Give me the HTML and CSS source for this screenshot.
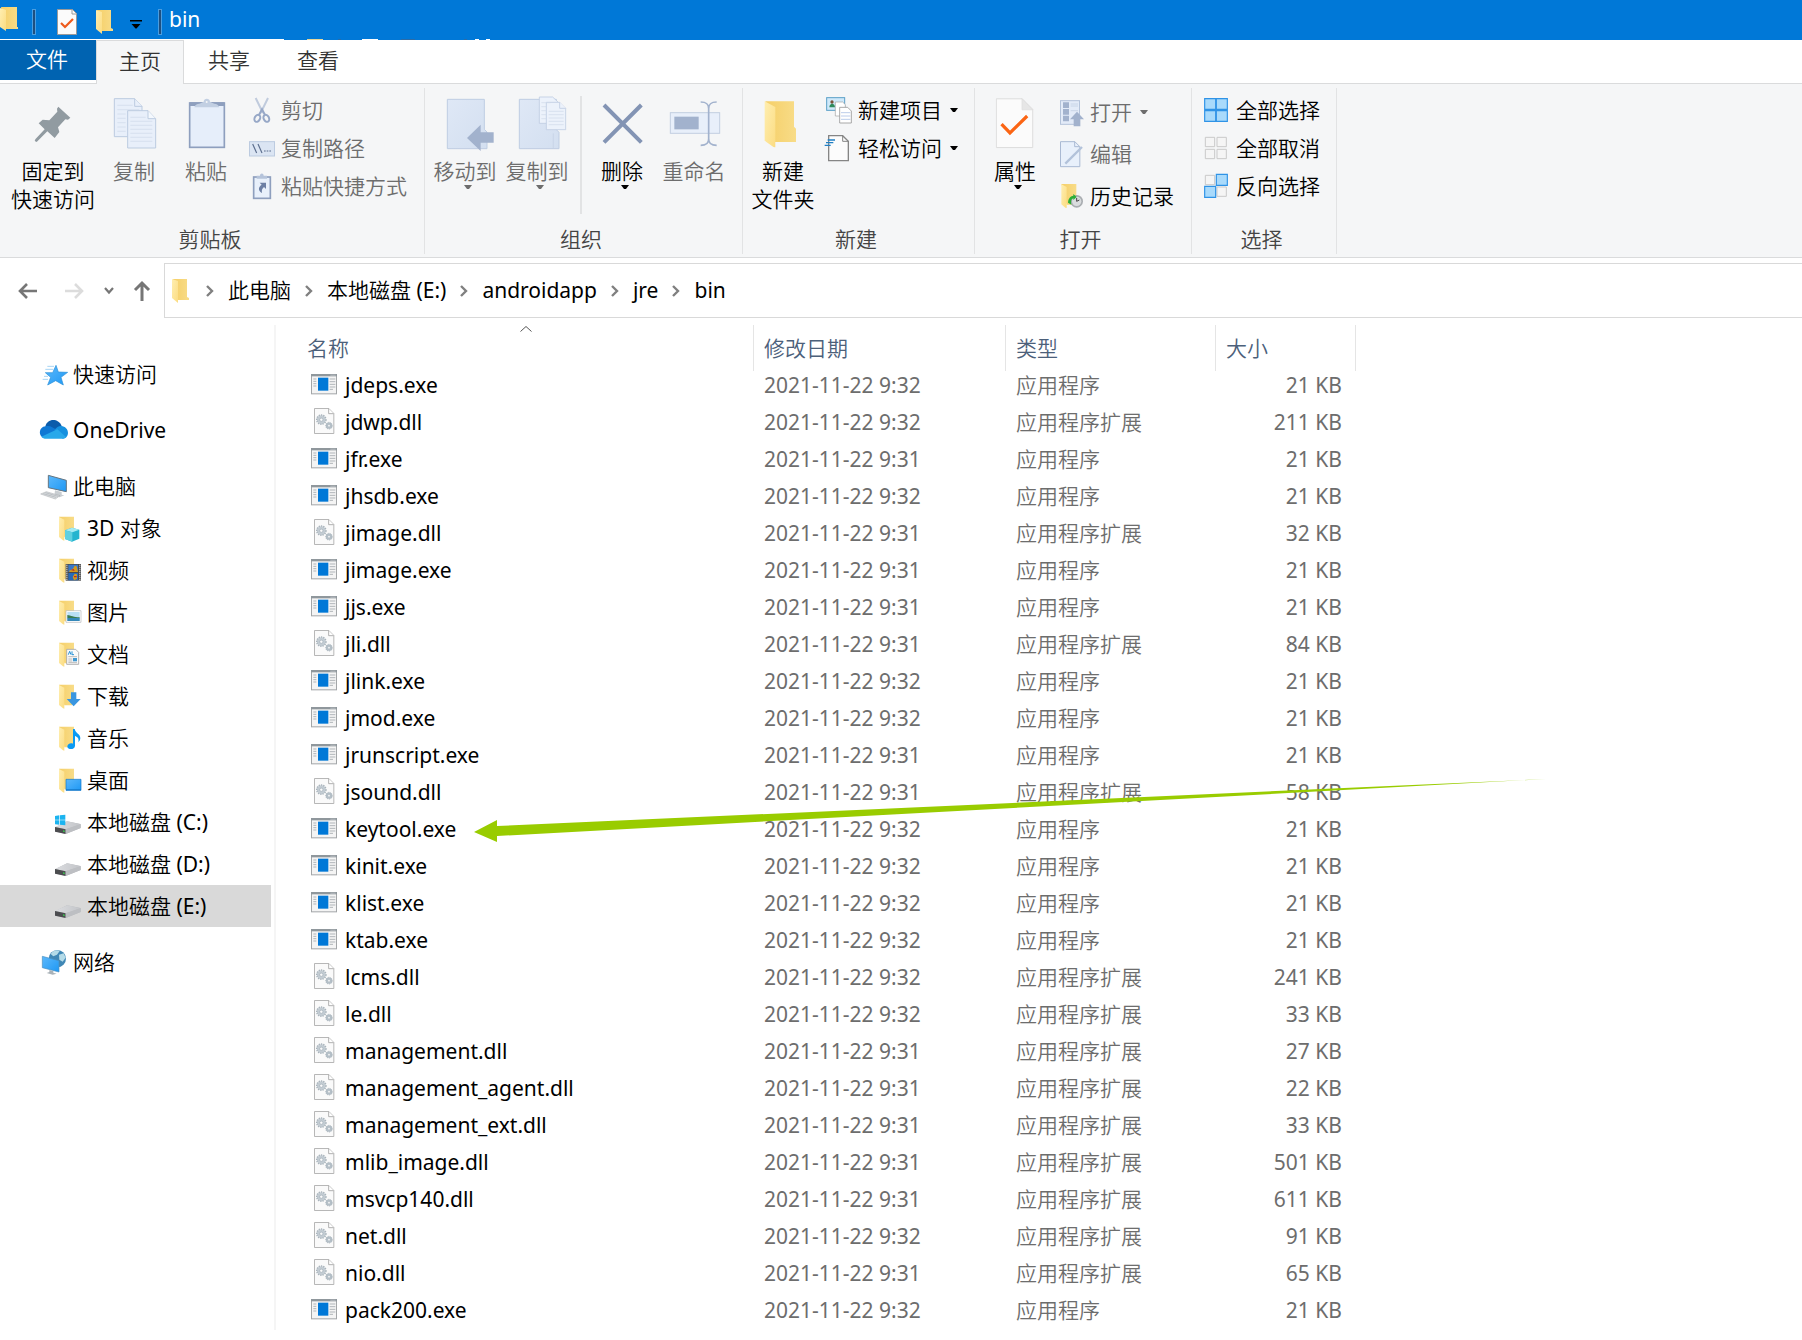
FILE: index.html
```html
<!DOCTYPE html>
<html lang="zh-CN">
<head>
<meta charset="utf-8">
<title>bin</title>
<link rel="stylesheet" href="styles.css">
</head>
<body>
<svg class="defs" aria-hidden="true">
  <defs>
    <linearGradient id="g-back" x1="0" x2="1"><stop offset="0" stop-color="#f5cf68"/><stop offset="1" stop-color="#f8dc88"/></linearGradient>
    <linearGradient id="g-front" x1="0" x2="1" y2="1"><stop offset="0" stop-color="#ffeeb0"/><stop offset="1" stop-color="#fbdc82"/></linearGradient>
    <linearGradient id="g-blue" x1="0" x2="1" y2="1"><stop offset="0" stop-color="#5cb8fb"/><stop offset="1" stop-color="#1e98f4"/></linearGradient>
    <linearGradient id="g-pale" x1="0" x2="1" y2="1"><stop offset="0" stop-color="#dfe8f6"/><stop offset="1" stop-color="#d3dff0"/></linearGradient>
    <linearGradient id="g-disk" x1="0" x2="1"><stop offset="0" stop-color="#dcdde0"/><stop offset="1" stop-color="#c3c5c9"/></linearGradient>
  </defs>
  <symbol id="folder" viewBox="0 0 84 84">
    <path d="M12 8h45v57h-5v5H28z" fill="url(#g-back)"/>
    <path d="M12 9l16 8v63l-4-1-12-10z" fill="url(#g-front)"/>
  </symbol>
  <symbol id="folder-big" viewBox="0 0 100 150">
    <path d="M4 12h86v76l6 6v40H33z" fill="url(#g-back)"/>
    <path d="M2 12l32 17v124L6 133l-4-4z" fill="url(#g-front)"/>
  </symbol>
  <symbol id="exe" viewBox="0 0 78 78">
    <rect x="1.500" y="10.500" width="75" height="58" fill="#f4f4f4" stroke="#a3a6a8" stroke-width="3"/>
    <path d="M0 9h78v7H0z" fill="#8f979c"/><path d="M58 11h16v3H58z" fill="#b9bec2"/>
    <path d="M21 20h31v39H21z" fill="#0078d7"/>
    <path d="M7 24h9M7 31h9M7 38h9M7 45h9M56 24h17M56 32h17M56 40h17M56 48h17M56 55h10" stroke="#b0b5b9" stroke-width="3"/>
  </symbol>
  <symbol id="dll" viewBox="0 0 78 78">
    <path d="M10.500 1.500h43l15 15v60h-58z" fill="#fafafa" stroke="#a8a8a8" stroke-width="2.500"/>
    <path d="M53 2v15h15" fill="#fff" stroke="#a0a0a0" stroke-width="2.500"/>
    <g fill="none">
      <circle cx="31" cy="35" r="9" stroke="#c3ccd3" stroke-width="9"/>
      <circle cx="31" cy="35" r="14" stroke="#a8b3bb" stroke-width="4" stroke-dasharray="4 3"/>
      <circle cx="31" cy="35" r="5" stroke="#a8b3bb" stroke-width="2"/>
      <circle cx="54" cy="53" r="6" stroke="#b4bfc7" stroke-width="7"/>
      <circle cx="54" cy="53" r="10" stroke="#a8b3bb" stroke-width="3" stroke-dasharray="3 3"/>
    </g>
  </symbol>
  <symbol id="disk" viewBox="0 0 84 84">
    <path d="M0 58l36-18 41 8v12L32 78 0 70z" fill="#b9bbbf"/>
    <path d="M0 57l37-17 40 9-45 15z" fill="url(#g-disk)"/>
    <path d="M0 57l32 7v14L0 71z" fill="#4c4d50"/><path d="M32 64l45-15v11L32 78z" fill="#bdbfc3"/>
    <path d="M24 67l5 1v4l-5-1z" fill="#35d04a"/>
  </symbol>
  <symbol id="checkdoc" viewBox="0 0 120 156">
    <path d="M2 2h80l32 32v118H2z" fill="#fbfbfb" stroke="#dcdcdc" stroke-width="3"/>
    <path d="M81 2v34h33z" fill="#e6e6e6" stroke="#dcdcdc" stroke-width="2"/>
    <path d="M18 80l26 27 53-52" fill="none" stroke="#fb6514" stroke-width="10"/>
  </symbol>
  <symbol id="chev" viewBox="0 0 8 12"><path d="M1 1l5 5-5 5" fill="none" stroke="#808080" stroke-width="2.400"/></symbol>
  <symbol id="drop" viewBox="0 0 8 4"><path d="M0 0h8L5 4H3z" fill="currentColor"/></symbol>
</svg>

<header class="titlebar">
  <svg class="t-folder" viewBox="0 0 18 26"><path d="M1 0h16v20h1v2H5z" fill="url(#g-back)"/><path d="M0 1l6 2v21l-6-4z" fill="url(#g-front)"/></svg>
  <i class="bar"></i>
  <button class="t-btn t-check" aria-label="属性"><svg viewBox="0 0 20 26"><path d="M.5.500h15l4 4v21H.5z" fill="#fbfbfb" stroke="#9a9a9a"/><path d="M15 1v4h4" fill="none" stroke="#9a9a9a"/><path d="M4 14l4 4 8-8" fill="none" stroke="#ee5a1c" stroke-width="2.200"/></svg></button>
  <button class="t-btn t-new" aria-label="新建文件夹"><svg viewBox="0 0 18 26"><path d="M1 1h14v18l2 1v2H5z" fill="url(#g-back)"/><path d="M0 1l6 2v22l-6-5z" fill="url(#g-front)"/></svg></button>
  <button class="t-btn t-more" aria-label="自定义快速访问工具栏"><svg viewBox="0 0 12 9"><path d="M0 0h12v1.500H0zM1.500 4h9L6.500 8.500h-1z" fill="#000"/></svg></button>
  <i class="bar"></i>
  <h1>bin</h1>
  <svg class="edge" viewBox="0 0 500 1"><path d="M0 0h284v1H0zM362 0h16v1h-16zM475 0h4v1h-4zM486 0h4v1h-4z" fill="#fff"/><path d="M307 0h16v1h-16z" fill="#e8d79a"/><path d="M338 0h3v1h-3zM401 0h14v1h-14zM464 0h3v1h-3z" fill="#2c6ba5"/></svg>
</header>

<nav class="tabs">
  <button class="tab file">文件</button>
  <button class="tab active">主页</button>
  <button class="tab">共享</button>
  <button class="tab">查看</button>
</nav>

<section class="ribbon">
  <div class="group clip">
    <div class="tools">
      <button class="big pin">
        <svg viewBox="84 54 150 150"><path d="M175 80l36 33-7 6-8-1-22 24 4 14-14 18-22-20-32 32-6-3 2-5 28-30-18-18 12-11 20 2 24-26-1-9z" fill="#919ba1"/></svg>
        <span>固定到<br>快速访问</span></button>
      <button class="big off">
        <svg viewBox="327 54 150 150"><g stroke="#bccbe0" stroke-width="3" fill="#e8effa"><path d="M343 56h61l22 23v91h-83z"/><path d="M404 56v23h22"/><path d="M383 92h61l23 24v88h-84z"/><path d="M444 92v24h23" fill="#f4f8fd"/></g><path d="M352 76h46M352 89h66M352 102h25M352 115h25M352 128h25M352 141h25M352 154h25M391 112h46M391 124h66M391 136h66M391 148h66M391 160h66M391 172h66M391 184h66" stroke="#cfdaea" stroke-width="2"/></svg>
        <span>复制</span></button>
      <button class="big off">
        <svg viewBox="543 54 150 150"><rect x="569" y="69" width="104" height="133" fill="#e6eefa" stroke="#8e9fbe" stroke-width="5"/><path d="M569 67h104v11H569z" fill="#8e9fbe"/><path d="M583 82c2-12 16-9 28-17 0-12 19-12 19 0 12 8 26 5 28 17z" fill="#c2cfe2"/><circle cx="620" cy="66" r="3" fill="#f5f6f7"/></svg>
        <span>粘贴</span></button>
      <div class="smalls">
        <button class="small off"><svg viewBox="747 54 78 78"><path d="M767 54l22 45M804 54l-22 45" stroke="#c0cbdd" stroke-width="6"/><g fill="none" stroke="#97a8c7" stroke-width="6"><ellipse cx="772" cy="115" rx="8" ry="11" transform="rotate(28 772 115)"/><ellipse cx="799" cy="115" rx="8" ry="11" transform="rotate(-28 799 115)"/><path d="M777 105l9-17 9 17"/></g></svg>剪切</button>
        <button class="small off"><svg viewBox="747 168 78 78"><rect x="748.500" y="185" width="75" height="43" fill="#dbe5f3" stroke="#bccbe0" stroke-width="3"/><path d="M758 192l12 27M774 192l12 27M792 213h5M800 213h5M808 213h5" stroke="#5d6f8e" stroke-width="3.500"/></svg>复制路径</button>
        <button class="small off"><svg viewBox="747 282 78 78"><rect x="761" y="291" width="50" height="64" fill="#e8f0fb" stroke="#8e9fbe" stroke-width="5"/><path d="M770 296v-9h10c0-9 11-9 11 0h10v9z" fill="#b5c3da"/><path d="M779 308h19v19l-6-6c-7 6-7 10-6 18-11-6-13-17-1-25z" fill="#6c7fa4"/></svg>粘贴快捷方式</button>
      </div>
    </div>
    <h2>剪贴板</h2>
  </div>

  <div class="group org">
    <div class="tools">
      <button class="big off"><svg viewBox="60 54 150 150"><path d="M82 58h111v90l8 8v50H82z" fill="url(#g-pale)" stroke="#bfcde2" stroke-width="3"/><path d="M141 174l41-40v23h39v31h-39v25z" fill="#a2b2cd"/></svg>
        <span>移动到</span><svg class="drop"><use href="#drop"/></svg></button>
      <button class="big off"><svg viewBox="276 54 150 150"><path d="M298 58h111v91l8 8v49H298z" fill="url(#g-pale)" stroke="#bfcde2" stroke-width="3"/><path d="M400 160v46" stroke="#c3d0e4" stroke-width="2"/><g stroke="#bfcde2" stroke-width="2.500" fill="#ecf2fb"><path d="M358 51h40l19 18v61h-59z"/><path d="M379 67h40l18 18v64h-58z"/><path d="M419 67v18h18"/></g><path d="M364 68h28M364 80h14M364 92h14M364 104h14M364 116h14M386 94h45M386 104h45M386 114h45M386 124h45M386 134h45" stroke="#cfdaea" stroke-width="2"/></svg>
        <span>复制到</span><svg class="drop"><use href="#drop"/></svg></button>
      <i class="split"></i>
      <button class="big"><svg viewBox="531 54 150 150"><path d="M552 75l112 112M664 75L552 187" stroke="#8394b4" stroke-width="12"/></svg>
        <span>删除</span><svg class="drop"><use href="#drop"/></svg></button>
      <button class="big off"><svg viewBox="747 54 150 150"><rect x="751" y="98" width="148" height="62" fill="#e8effa" stroke="#c3cfe1" stroke-width="3"/><path d="M763 110h73v38h-73z" fill="#a2b2cd"/><path d="M842 66c18 0 24 6 24 20v90c0 14-6 20-24 20M890 66c-18 0-24 6-24 20v90c0 14 6 20 24 20" fill="none" stroke="#a2b2cd" stroke-width="5"/></svg>
        <span>重命名</span></button>
    </div>
    <h2>组织</h2>
  </div>

  <div class="group new">
    <div class="tools">
      <button class="big"><svg viewBox="57 54 150 150"><use href="#folder-big" x="75" y="52" width="100" height="150"/></svg>
        <span>新建<br>文件夹</span></button>
      <div class="smalls">
        <button class="small"><svg viewBox="258 54 78 78"><rect x="260" y="53" width="54" height="38" fill="#cfe9fa" stroke="#5aa0c8" stroke-width="3"/><circle cx="276" cy="66" r="5" fill="#7a5238"/><path d="M268 82c0-14 17-14 17 0z" fill="#2f8a5c"/><path d="M286 66h22l8 8v34h-30z" fill="#fff" stroke="#a0a0a0" stroke-width="2"/><path d="M299 82h24l11 11v36h-35z" fill="#fff" stroke="#999" stroke-width="2.500"/><path d="M303 98h28M303 108h28M303 118h28" stroke="#9ab4e0" stroke-width="2"/></svg>新建项目<svg class="drop"><use href="#drop"/></svg></button>
        <button class="small"><svg viewBox="258 168 78 78"><path d="M266 167h42l17 17v58h-59z" fill="#fcfcfc" stroke="#858585" stroke-width="4"/><path d="M308 167v17h17" fill="none" stroke="#858585" stroke-width="3"/><path d="M263 180h22M258 188h22M254 196h18" stroke="#1f7fc4" stroke-width="4"/></svg>轻松访问<svg class="drop"><use href="#drop"/></svg></button>
      </div>
    </div>
    <h2>新建</h2>
  </div>

  <div class="group open">
    <div class="tools">
      <button class="big"><svg viewBox="753 54 150 150"><use href="#checkdoc" x="770" y="54" width="117" height="153"/></svg>
        <span>属性</span><svg class="drop"><use href="#drop"/></svg></button>
      <div class="smalls tall">
        <button class="small off"><svg viewBox="243 60 78 78"><rect x="244.500" y="62" width="57" height="71" fill="#e3ebf8" stroke="#b4c3da" stroke-width="3"/><path d="M252 67h18v17h-18zM252 87h18v17h-18zM252 107h18v17h-18z" fill="#a2b2cd"/><path d="M275 72h22M275 78h22M275 92h22" stroke="#bccbe0" stroke-width="2"/><path d="M294 95l21 23h-11v21h-20v-21h-11z" fill="#a2b2cd"/></svg>打开<svg class="drop"><use href="#drop"/></svg></button>
        <button class="small off"><svg viewBox="243 186 78 78"><path d="M244.500 185h43l15 15v60h-58z" fill="#e8f0fb" stroke="#a9b9d3" stroke-width="3"/><path d="M287 185v15h15" fill="none" stroke="#a9b9d3" stroke-width="3"/><path d="M259 251l50-50" stroke="#b2c2da" stroke-width="7"/></svg>编辑</button>
        <button class="small"><svg viewBox="243 312 78 78"><use href="#folder" x="235" y="304" width="84" height="84"/><circle cx="293" cy="364" r="19" fill="#a9adb1"/><circle cx="293" cy="364" r="14" fill="#d9dcde"/><path d="M293 354v10l8-4" fill="none" stroke="#444" stroke-width="3"/><path d="M267 368c1-15 9-20 16-21v-5l10 9-10 9v-5c-7 2-8 9-6 19z" fill="#2cae37"/></svg>历史记录</button>
      </div>
    </div>
    <h2>打开</h2>
  </div>

  <div class="group sel">
    <div class="tools">
      <div class="smalls">
        <button class="small"><svg viewBox="672 54 78 78"><g fill="#a9dafb" stroke="#2f93e6" stroke-width="3.500"><path d="M674 56h33v32h-33zM709 56h33v32h-33zM674 92h33v32h-33zM709 92h33v32h-33z"/></g></svg>全部选择</button>
        <button class="small"><svg viewBox="672 168 78 78"><g fill="#f5f5f5" stroke="#c9c9c9" stroke-width="3"><path d="M676 172h28v28h-28zM711 172h28v28h-28zM676 208h28v28h-28zM711 208h28v28h-28z"/></g></svg>全部取消</button>
        <button class="small"><svg viewBox="672 282 78 78"><g fill="#f5f5f5" stroke="#c9c9c9" stroke-width="3"><path d="M676 286h28v28h-28zM711 321h28v28h-28z"/></g><g fill="#a9dafb" stroke="#2f93e6" stroke-width="3.500"><path d="M709 283h33v33h-33zM674 319h33v33h-33z"/></g></svg>反向选择</button>
      </div>
    </div>
    <h2>选择</h2>
  </div>
</section>

<div class="address">
  <button class="nav" aria-label="后退"><svg viewBox="0 0 20 20"><path d="M9 3l-7 7 7 7M2 10h17" fill="none" stroke="#767676" stroke-width="2.600"/></svg></button>
  <button class="nav" aria-label="前进"><svg viewBox="0 0 20 20"><path d="M11 3l7 7-7 7M18 10H1" fill="none" stroke="#dcdcdc" stroke-width="2.600"/></svg></button>
  <button class="nav recent" aria-label="最近浏览的位置"><svg viewBox="0 0 10 8"><path d="M1 1l4 4.500L9 1" fill="none" stroke="#767676" stroke-width="2.200"/></svg></button>
  <button class="nav" aria-label="上移"><svg viewBox="0 0 20 20"><path d="M3 9l7-7 7 7M10 2v18" fill="none" stroke="#767676" stroke-width="3"/></svg></button>
  <div class="crumbs">
    <svg class="c-folder" viewBox="0 0 18 26"><path d="M1 1h14v18l2 1v2H5z" fill="url(#g-back)"/><path d="M0 1l6 2v22l-6-5z" fill="url(#g-front)"/></svg>
    <svg class="chev"><use href="#chev"/></svg><a href="#">此电脑</a>
    <svg class="chev"><use href="#chev"/></svg><a href="#">本地磁盘 (E:)</a>
    <svg class="chev"><use href="#chev"/></svg><a href="#">androidapp</a>
    <svg class="chev"><use href="#chev"/></svg><a href="#">jre</a>
    <svg class="chev"><use href="#chev"/></svg><a href="#">bin</a>
  </div>
</div>

<main>
  <nav class="side">
    <a href="#" class="gap"><svg viewBox="120 30 84 84"><path d="M168 46l7 20 28 1-20 15 7 23-23-13-24 13 9-23-16-14h22z" fill="url(#g-blue)" stroke="#2b8fd8" stroke-width="2"/><path d="M142 49h20M136 58h24M132 79h12M128 88h16" stroke="#a6d4f4" stroke-width="3"/></svg>快速访问</a>
    <a href="#" class="gap"><svg viewBox="120 198 84 84"><path d="M136 230c4-24 38-28 49-2l-14 16z" fill="#0b5cab"/><path d="M137 264c-24 0-22-34 0-35 14-3 22 4 38 14l20 18-6 3z" fill="#0f78d4"/><path d="M163 240c8-10 14-13 21-12 24 2 28 36 4 38z" fill="#1590df"/><path d="M124 260l48-22 27 24c-4 3-7 4-11 4h-50c-6 0-10-2-14-6z" fill="#28a8ea"/></svg>OneDrive</a>
    <a href="#"><svg viewBox="120 366 84 84"><path d="M145 376l54 15v34l-54-12z" fill="url(#g-blue)" stroke="#667580" stroke-width="3"/><path d="M165 421l20 5v8l8 2-14 6-16-5z" fill="#c9ced2"/><path d="M122 432l17-7 41 12-14 10z" fill="#dadddf" stroke="#a4a9ad" stroke-width="1.500"/><path d="M130 431l38 11M136 428l38 11" stroke="#9ba1a6" stroke-width="1.500"/></svg>此电脑</a>
    <a href="#" class="sub"><svg viewBox="0 0 84 84"><use href="#folder" width="84" height="84"/><path d="M30 49l21-8 22 6v27l-22 9-21-8z" fill="#25b4cf"/><path d="M30 49l21-8 22 6-21 8z" fill="#a5eaf2"/><path d="M30 49l22 6v28l-22-8z" fill="#5fd0e0"/></svg>3D 对象</a>
    <a href="#" class="sub"><svg viewBox="0 0 84 84"><use href="#folder" width="84" height="84"/><path d="M32 24h46v50H32z" fill="#4a4a4a"/><path d="M40 26h29v22H40z" fill="#3977c8"/><path d="M40 51h29v22H40z" fill="#2869b8"/><path d="M43 44l11-6 5-9 6 2 4 17H43zM53 63l6-10 7 2v14l-9 4z" fill="#d39a1f"/><path d="M47 42l9-3 3 6zM57 60h8v4h-8z" fill="#b8282c"/><path d="M35.500 26v47M74.500 26v47" stroke="#e4e4e4" stroke-width="4" stroke-dasharray="3 3"/></svg>视频</a>
    <a href="#" class="sub"><svg viewBox="0 0 84 84"><use href="#folder" width="84" height="84"/><path d="M33 38h45v35H33z" fill="#fff" stroke="#b4b7ba" stroke-width="2"/><path d="M37 42h37v27H37z" fill="#b9dff5"/><path d="M37 51c10 1 20 7 37 7v3H37z" fill="#3b7b51"/><path d="M37 60h37v9H37z" fill="#3588b9"/></svg>图片</a>
    <a href="#" class="sub"><svg viewBox="0 0 84 84"><use href="#folder" width="84" height="84"/><path d="M35 28h27l9 9v36H35z" fill="#fafafa" stroke="#a5a5a5" stroke-width="2.500"/><path d="M40 44l4-10 4 10M51 34v10h6" fill="none" stroke="#2591d6" stroke-width="3"/><path d="M40 50h26M40 57h12M40 63h12M40 68h26" stroke="#9a9a9a" stroke-width="2"/><path d="M54 54h12v10H54z" fill="#4199d1"/></svg>文档</a>
    <a href="#" class="sub"><svg viewBox="0 0 84 84"><use href="#folder" width="84" height="84"/><path d="M48 31h16v20h13L56 73 35 51h13z" fill="#3a96e0"/></svg>下载</a>
    <a href="#" class="sub"><svg viewBox="0 0 84 84"><use href="#folder" width="84" height="84"/><path d="M54 15h5c3 14 17 15 17 27 0 6-3 9-6 13 3-13-4-17-10-19v29c0 13-22 13-23 3 0-8 9-12 17-9z" fill="#0a9af3"/></svg>音乐</a>
    <a href="#" class="sub"><svg viewBox="0 0 84 84"><use href="#folder" width="84" height="84"/><path d="M33 40h45v33H33z" fill="url(#g-blue)" stroke="#0f76c8" stroke-width="2"/><path d="M33 70h45v3H33z" fill="#1376c6"/></svg>桌面</a>
    <a href="#" class="sub"><svg viewBox="0 0 84 84"><use href="#disk" width="84" height="84"/><path d="M0 24l13-2v13H0zM15 22l16-2v15H15zM0 37h13v13L0 49zM15 37h16v15l-16-2z" fill="#1cb4f0"/></svg>本地磁盘 (C:)</a>
    <a href="#" class="sub"><svg><use href="#disk"/></svg>本地磁盘 (D:)</a>
    <a href="#" class="sub current"><svg><use href="#disk"/></svg>本地磁盘 (E:)</a>
    <a href="#" class="net"><svg viewBox="120 864 84 84"><circle cx="172" cy="896" r="26" fill="#3f87b5"/><path d="M152 882c8-12 21-13 27-9l-8 11-11 5zM177 884l14-4 6 13-9 12-10-6z" fill="#b4dbe8"/><path d="M127 889l50 13v34l-50-13z" fill="url(#g-blue)" stroke="#4b8fc0" stroke-width="2"/><path d="M148 930l12 3v5l10 3-12 3-18-5 8-3z" fill="#a9b2b8"/></svg>网络</a>
  </nav>

  <section class="files">
    <table>
      <colgroup><col class="c-name"><col class="c-date"><col class="c-type"><col class="c-size"></colgroup>
      <thead><tr><th>名称<svg class="sort" viewBox="0 0 12 6"><path d="M.5 5.500L6 .500l5.500 5" fill="none" stroke="#555"/></svg></th><th>修改日期</th><th>类型</th><th>大小</th></tr></thead>
      <tbody>
        <tr><td><svg><use href="#exe"/></svg>jdeps.exe</td><td>2021-11-22 9:32</td><td>应用程序</td><td>21 KB</td></tr>
        <tr><td><svg><use href="#dll"/></svg>jdwp.dll</td><td>2021-11-22 9:32</td><td>应用程序扩展</td><td>211 KB</td></tr>
        <tr><td><svg><use href="#exe"/></svg>jfr.exe</td><td>2021-11-22 9:31</td><td>应用程序</td><td>21 KB</td></tr>
        <tr><td><svg><use href="#exe"/></svg>jhsdb.exe</td><td>2021-11-22 9:32</td><td>应用程序</td><td>21 KB</td></tr>
        <tr><td><svg><use href="#dll"/></svg>jimage.dll</td><td>2021-11-22 9:31</td><td>应用程序扩展</td><td>32 KB</td></tr>
        <tr><td><svg><use href="#exe"/></svg>jimage.exe</td><td>2021-11-22 9:31</td><td>应用程序</td><td>21 KB</td></tr>
        <tr><td><svg><use href="#exe"/></svg>jjs.exe</td><td>2021-11-22 9:31</td><td>应用程序</td><td>21 KB</td></tr>
        <tr><td><svg><use href="#dll"/></svg>jli.dll</td><td>2021-11-22 9:31</td><td>应用程序扩展</td><td>84 KB</td></tr>
        <tr><td><svg><use href="#exe"/></svg>jlink.exe</td><td>2021-11-22 9:32</td><td>应用程序</td><td>21 KB</td></tr>
        <tr><td><svg><use href="#exe"/></svg>jmod.exe</td><td>2021-11-22 9:32</td><td>应用程序</td><td>21 KB</td></tr>
        <tr><td><svg><use href="#exe"/></svg>jrunscript.exe</td><td>2021-11-22 9:31</td><td>应用程序</td><td>21 KB</td></tr>
        <tr><td><svg><use href="#dll"/></svg>jsound.dll</td><td>2021-11-22 9:31</td><td>应用程序扩展</td><td>58 KB</td></tr>
        <tr><td><svg><use href="#exe"/></svg>keytool.exe</td><td>2021-11-22 9:32</td><td>应用程序</td><td>21 KB</td></tr>
        <tr><td><svg><use href="#exe"/></svg>kinit.exe</td><td>2021-11-22 9:32</td><td>应用程序</td><td>21 KB</td></tr>
        <tr><td><svg><use href="#exe"/></svg>klist.exe</td><td>2021-11-22 9:32</td><td>应用程序</td><td>21 KB</td></tr>
        <tr><td><svg><use href="#exe"/></svg>ktab.exe</td><td>2021-11-22 9:32</td><td>应用程序</td><td>21 KB</td></tr>
        <tr><td><svg><use href="#dll"/></svg>lcms.dll</td><td>2021-11-22 9:32</td><td>应用程序扩展</td><td>241 KB</td></tr>
        <tr><td><svg><use href="#dll"/></svg>le.dll</td><td>2021-11-22 9:32</td><td>应用程序扩展</td><td>33 KB</td></tr>
        <tr><td><svg><use href="#dll"/></svg>management.dll</td><td>2021-11-22 9:31</td><td>应用程序扩展</td><td>27 KB</td></tr>
        <tr><td><svg><use href="#dll"/></svg>management_agent.dll</td><td>2021-11-22 9:31</td><td>应用程序扩展</td><td>22 KB</td></tr>
        <tr><td><svg><use href="#dll"/></svg>management_ext.dll</td><td>2021-11-22 9:31</td><td>应用程序扩展</td><td>33 KB</td></tr>
        <tr><td><svg><use href="#dll"/></svg>mlib_image.dll</td><td>2021-11-22 9:31</td><td>应用程序扩展</td><td>501 KB</td></tr>
        <tr><td><svg><use href="#dll"/></svg>msvcp140.dll</td><td>2021-11-22 9:31</td><td>应用程序扩展</td><td>611 KB</td></tr>
        <tr><td><svg><use href="#dll"/></svg>net.dll</td><td>2021-11-22 9:32</td><td>应用程序扩展</td><td>91 KB</td></tr>
        <tr><td><svg><use href="#dll"/></svg>nio.dll</td><td>2021-11-22 9:31</td><td>应用程序扩展</td><td>65 KB</td></tr>
        <tr><td><svg><use href="#exe"/></svg>pack200.exe</td><td>2021-11-22 9:32</td><td>应用程序</td><td>21 KB</td></tr>
      </tbody>
    </table>
    <svg class="pointer" viewBox="0 0 1072 64"><path d="M0 53l23-12v6L1072 0 23 57v6z" fill="#9c0"/></svg>
  </section>
</main>
</body>
</html>
```
FILE: styles.css
```css
* { box-sizing: border-box; }
body {
  margin: 0;
  min-height: 100vh;
  background: #fff;
  color: #000;
  font: 21px/28px "Noto Sans", "Noto Sans CJK SC DemiLight", "Noto Sans CJK SC Light", "Noto Sans CJK SC", sans-serif;
  overflow-x: hidden;
}
button {
  margin: 0;
  padding: 0;
  border: 0;
  background: none;
  color: inherit;
  font: inherit;
  white-space: nowrap;
}
a { color: inherit; text-decoration: none; }
h1, h2 { margin: 0; font: inherit; }
svg { flex: none; overflow: visible; }
.defs { position: absolute; width: 0; height: 0; }

/* Title bar */
.titlebar {
  position: relative;
  display: flex;
  align-items: center;
  height: 40px;
  background: #0078d7;
  color: #fff;
}
.titlebar svg { display: block; }
.t-folder { width: 18px; height: 26px; margin-right: 14px; }
.bar { width: 4px; height: 26px; background: #1e4f80; border: 1px solid #4b9ddf; margin-top: 4px; }
.t-btn { margin-top: 4px; }
.t-check { margin-left: 21px; }
.t-check svg { width: 20px; height: 26px; }
.t-new { margin-left: 19px; }
.t-new svg { width: 18px; height: 26px; }
.t-more { margin: 8px 16px 0 16px; }
.t-more svg { width: 12px; height: 9px; }
.titlebar h1 { margin-left: 7px; line-height: 38px; align-self: flex-start; }
.titlebar .edge { position: absolute; left: 0; bottom: 0; width: 500px; height: 1px; }

/* Tabs */
.tabs {
  display: flex;
  height: 44px;
  border-bottom: 1px solid #dadbdc;
}
.tab { height: 42px; padding: 0 23px 2px 24px; color: #333; }
.tab.file { width: 96px; height: 40px; padding: 0 2px 2px 0; background: #0063b1; color: #fff; }
.tab.active {
  width: 88px;
  height: 44px;
  padding: 0 0 4px;
  background: #f5f6f7;
  border: 1px solid #dadbdc;
  border-bottom: 0;
}

/* Ribbon */
.ribbon {
  display: flex;
  height: 174px;
  padding-top: 4px;
  background: #f5f6f7;
  border-bottom: 1px solid #dadbdc;
}
.group {
  display: flex;
  flex-direction: column;
  height: 166px;
  padding: 4px 0 0 4px;
  border-right: 1px solid #e2e3e4;
}
.clip { width: 425px; padding-left: 8px; }
.org { width: 318px; }
.new { width: 232px; }
.open { width: 217px; }
.sel { width: 145px; }
.group h2 { color: #444; text-align: center; margin-right: 9px; }
.clip h2 { margin-right: 12px; }
.tools { display: flex; height: 133px; }
.big {
  display: flex;
  flex-direction: column;
  align-items: center;
  justify-content: flex-start;
  width: 72px;
  padding-top: 6px;
}
.big > svg:first-child { width: 50px; height: 50px; margin-bottom: 9px; }
.pin { width: 90px; }
.off { color: #6d6d6d; }
.drop { width: 8px; height: 4px; }
.big .drop { margin-left: 6px; }
.smalls { padding-left: 7px; }
.small {
  display: flex;
  align-items: center;
  gap: 6px;
  height: 38px;
  padding-bottom: 2px;
}
.small > svg:first-child { width: 26px; height: 26px; margin-top: 2px; }
.small .drop { margin-left: 2px; }
.tall { padding-left: 9px; }
.tall .small { height: 42px; gap: 4px; }
.tall .drop { margin-left: 4px; }
.sel .smalls { padding-left: 8px; }
.split { width: 2px; height: 118px; margin: 4px 4px 0 7px; background: #e2e3e4; }

/* Address bar */
.address { display: flex; align-items: center; padding-top: 5px; }
.nav { display: flex; width: 20px; margin-left: 26px; }
.nav:first-child { margin-left: 18px; }
.nav svg { width: 20px; height: 20px; }
.recent { width: 10px; margin-left: 20px; }
.recent svg { width: 10px; height: 8px; }
.recent + .nav { margin-left: 18px; }
.crumbs {
  display: flex;
  flex: 1;
  align-items: center;
  gap: 14px;
  height: 55px;
  margin-left: 12px;
  padding-left: 7px;
  border: 1px solid #d9d9d9;
  border-right: 0;
}
.crumbs a { padding-bottom: 2px; }
.c-folder { width: 18px; height: 26px; margin-right: 2px; }
.chev { width: 8px; height: 12px; }

/* Content */
main { display: flex; padding-top: 7px; }
.side {
  width: 276px;
  height: 1005px;
  padding: 28px 3px 0 0;
  border-right: 2px solid #f5f5f5;
}
.side a {
  display: flex;
  align-items: center;
  gap: 5px;
  height: 42px;
  padding-left: 40px;
  white-space: nowrap;
}
.side svg { width: 28px; height: 28px; }
.side .gap { margin-bottom: 14px; }
.side .net { margin-top: 14px; }
.side .sub { padding-left: 55px; gap: 4px; }
.side .current { background: #d9d9d9; }

.files { position: relative; flex: 1; padding-left: 21px; }
table { width: 1059px; table-layout: fixed; border-collapse: collapse; }
.c-name { width: 457px; }
.c-date { width: 252px; }
.c-type { width: 210px; }
.c-size { width: 140px; }
th {
  position: relative;
  height: 42px;
  padding: 3px 0 0 10px;
  color: #4c607a;
  font-weight: 400;
  text-align: left;
}
th::after {
  content: "";
  position: absolute;
  top: 0;
  right: 0;
  width: 1px;
  height: 46px;
  background: #e5e5e5;
}
.sort { position: absolute; left: 223px; top: 1px; width: 12px; height: 6px; }
td { height: 37px; padding: 0 0 2px 10px; color: #6d6d6d; white-space: nowrap; }
td:first-child { padding: 2px 0 0 14px; color: #000; }
td:last-child { padding-right: 14px; text-align: right; }
td svg { width: 26px; height: 26px; margin: 0 8px 5px 0; vertical-align: middle; }
.pointer { position: absolute; left: 198px; top: 454px; width: 1072px; height: 64px; }
```
